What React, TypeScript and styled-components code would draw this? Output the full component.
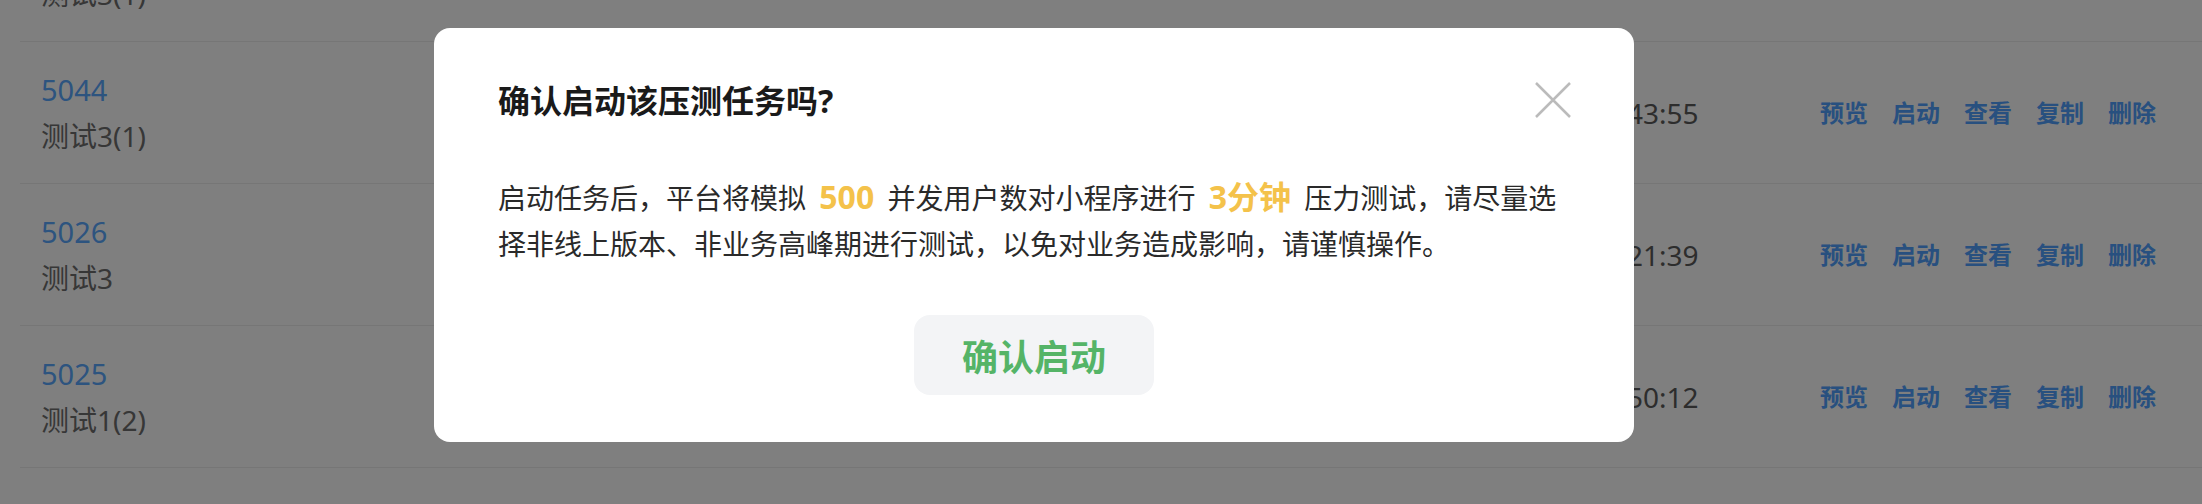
import React from 'react';
import styled, { createGlobalStyle } from 'styled-components';

const GlobalStyle = createGlobalStyle`
  html, body {
    margin: 0;
    padding: 0;
    background: #fff;
    overflow: hidden;
  }
  body {
    font-family: "Noto Sans", "Noto Sans CJK SC", sans-serif;
  }
`

const Page = styled.div`
  width: 2202px;
  height: 504px;
  overflow: hidden;
`

const TaskList = styled.ul`
  list-style: none;
  margin: -100px 0 0 20px;
  padding: 0;
`

const Row = styled.li`
  display: flex;
  align-items: center;
  height: 141px;
  padding: 0 46px 0 21px;
  border-bottom: 1px solid #ececec;
`

const Info = styled.div`
  flex: 1;
  display: flex;
  flex-direction: column;
  font-size: 28px;
  line-height: 46px;
`

const TaskId = styled.a`
  font-size: 29px;
  color: #5aa8ff;
  text-decoration: none;
`

const TaskName = styled.span`
  color: #6e6e6e;
`

const Time = styled.span`
  width: 386px;
  font-size: 28px;
  line-height: 46px;
  color: #5a5a5a;
`

const Actions = styled.div`
  display: flex;
  gap: 24px;
`

const Action = styled.a`
  font-size: 24px;
  line-height: 34px;
  font-weight: 700;
  color: #50a0ff;
  text-decoration: none;
`

const Mask = styled.div`
  position: fixed;
  inset: 0;
  box-sizing: border-box;
  padding: 28px 0 0 434px;
  background: rgba(0, 0, 0, 0.5);
`

const Dialog = styled.div`
  position: relative;
  box-sizing: border-box;
  width: 1200px;
  padding: 51px 64px 47px;
  background: #fff;
  border-radius: 16px;
`

const Title = styled.h2`
  margin: 0;
  font-size: 32px;
  line-height: 44px;
  font-weight: 700;
  color: #1a1a1a;
`

const Close = styled.button`
  position: absolute;
  top: 54px;
  right: 63px;
  width: 36px;
  height: 36px;
  padding: 0;
  border: none;
  background: none;
  cursor: pointer;
`

const Content = styled.p`
  margin: 51px 0 0;
  font-size: 28px;
  line-height: 46px;
  color: #2a2a2a;
`

const Strong = styled.span`
  margin: 0 6px;
  font-size: 32px;
  line-height: 46px;
  font-weight: 700;
  color: #f4c24a;
`

const Footer = styled.div`
  display: flex;
  justify-content: center;
  margin-top: 48px;
`

const ConfirmButton = styled.button`
  width: 240px;
  height: 80px;
  border: none;
  border-radius: 16px;
  background: #f3f4f6;
  color: #55b467;
  font-family: inherit;
  font-size: 36px;
  font-weight: 700;
  cursor: pointer;
`

const tasks = [
  { id: '5045', name: '测试3(1)', time: '2023-03-08 16:02:10' },
  { id: '5044', name: '测试3(1)', time: '2023-03-08 15:43:55' },
  { id: '5026', name: '测试3', time: '2023-03-07 11:21:39' },
  { id: '5025', name: '测试1(2)', time: '2023-03-07 10:50:12' },
  { id: '5024', name: '测试1', time: '2023-03-06 18:30:45' },
]

const actionNames = ['预览', '启动', '查看', '复制', '删除']

const App: React.FC = () => {
  return (
    <Page>
      <GlobalStyle />
      <TaskList>
        {tasks.map(task => (
          <Row key={task.id}>
            <Info>
              <TaskId href="#">{task.id}</TaskId>
              <TaskName>{task.name}</TaskName>
            </Info>
            <Time>{task.time}</Time>
            <Actions>
              {actionNames.map(name => (
                <Action key={name} href="#">{name}</Action>
              ))}
            </Actions>
          </Row>
        ))}
      </TaskList>
      <Mask>
        <Dialog>
          <Title>确认启动该压测任务吗?</Title>
          <Close aria-label="关闭">
            <svg width="36" height="36" viewBox="0 0 36 36">
              <path d="M1 1L35 35M35 1L1 35" stroke="#bbb" strokeWidth="2.5" fill="none" />
            </svg>
          </Close>
          <Content>
            启动任务后，平台将模拟 <Strong>500</Strong> 并发用户数对小程序进行 <Strong>3分钟</Strong> 压力测试，请尽量选择非线上版本、非业务高峰期进行测试，以免对业务造成影响，请谨慎操作。
          </Content>
          <Footer>
            <ConfirmButton>确认启动</ConfirmButton>
          </Footer>
        </Dialog>
      </Mask>
    </Page>
  );
}

export default App;
